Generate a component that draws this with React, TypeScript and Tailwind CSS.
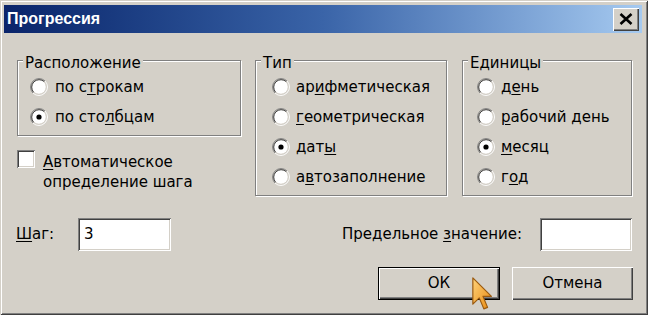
import React from "react";

const FONT = { fontFamily: '"DejaVu Sans", "Noto Sans", sans-serif' };

function Radio({ checked }: { checked?: boolean }) {
  return (
    <svg width="18" height="18" viewBox="0 0 18 18" className="shrink-0">
      <circle cx="9" cy="9" r="7" fill="#ffffff" />
      <path d="M2.99 15.01 A8.5 8.5 0 0 1 15.01 2.99" fill="none" stroke="#808080" strokeWidth="1" />
      <path d="M15.01 2.99 A8.5 8.5 0 0 1 2.99 15.01" fill="none" stroke="#ffffff" strokeWidth="1" />
      <path d="M3.7 14.3 A7.5 7.5 0 0 1 14.3 3.7" fill="none" stroke="#404040" strokeWidth="1" />
      <path d="M14.3 3.7 A7.5 7.5 0 0 1 3.7 14.3" fill="none" stroke="#d4d0c8" strokeWidth="1" />
      {checked && <circle cx="9" cy="9" r="2.6" fill="#000000" />}
    </svg>
  );
}

function RadioRow({
  checked,
  pre,
  u,
  post,
  gap,
}: {
  checked?: boolean;
  pre: string;
  u: string;
  post: string;
  gap: string;
}) {
  return (
    <div className={`flex items-center h-[30px] ${gap}`}>
      <Radio checked={checked} />
      <span className="whitespace-nowrap">
        {pre}
        <span className="underline underline-offset-2">{u}</span>
        {post}
      </span>
    </div>
  );
}

function Group({
  title,
  width,
  pad,
  children,
}: {
  title: string;
  width: string;
  pad: string;
  children: React.ReactNode;
}) {
  return (
    <div
      className={`${width} flex flex-col border border-[#808080] shadow-[inset_1px_1px_0_#ffffff,1px_1px_0_#ffffff] pb-[3px]`}
    >
      <span className="-mt-[7px] ml-[5px] self-start px-[2px] bg-[#d4d0c8] leading-[18px] whitespace-nowrap">
        {title}
      </span>
      <div className={`flex flex-col ${pad}`}>{children}</div>
    </div>
  );
}

const sunken =
  "bg-white shadow-[inset_1px_1px_0_#808080,inset_-1px_-1px_0_#ffffff,inset_2px_2px_0_#404040,inset_-2px_-2px_0_#d4d0c8]";

const raised =
  "bg-[#d4d0c8] shadow-[inset_1px_1px_0_#ffffff,inset_-1px_-1px_0_#404040,inset_-2px_-2px_0_#808080]";

export default function App() {
  return (
    <div
      className="relative w-[648px] h-[315px] bg-[#d4d0c8] pt-[5px] pl-[4px] pr-[6px] flex flex-col text-black text-[15px] shadow-[inset_1px_1px_0_#d4d0c8,inset_-1px_-1px_0_#404040,inset_2px_2px_0_#ffffff,inset_-2px_-2px_0_#808080] overflow-hidden"
      style={FONT}
    >
      {/* Title bar */}
      <div className="h-[28px] flex items-center justify-between bg-linear-to-r from-[#0a246a] via-[#3a64a8] to-[#a6caf0] pl-[3px] pr-[3px]">
        <span
          className="text-white font-bold text-[16px] leading-none"
          style={{ fontFamily: '"Liberation Sans", Arial, sans-serif' }}
        >
          Прогрессия
        </span>
        <div className={`w-[26px] h-[23px] ${raised} flex items-center justify-center`}>
          <svg width="14" height="12" viewBox="0 0 14 12">
            <path d="M1.5 1 L12.5 11 M12.5 1 L1.5 11" stroke="#000" strokeWidth="2.6" />
          </svg>
        </div>
      </div>

      {/* Body */}
      <div className="ml-[13px] w-[615px] flex flex-col">
        {/* Groups row */}
        <div className="mt-[27px] flex items-start">
          <div className="flex flex-col w-[224px]">
            <Group title="Расположение" width="w-[224px]" pad="pl-[12px]">
              <RadioRow pre="по с" u="т" post="рокам" gap="gap-[7px]" />
              <RadioRow checked pre="по сто" u="л" post="бцам" gap="gap-[7px]" />
            </Group>
            <div className="mt-[14px] flex items-start gap-[8px]">
              <div className={`w-[18px] h-[18px] ${sunken}`} />
              <div className="pt-[2px] leading-[20px]">
                <div>
                  <span className="underline underline-offset-2">А</span>втоматическое
                </div>
                <div>определение шага</div>
              </div>
            </div>
          </div>

          <div className="ml-[14px]">
            <Group title="Тип" width="w-[192px]" pad="pl-[16px]">
              <RadioRow pre="ар" u="и" post="фметическая" gap="gap-[6px]" />
              <RadioRow pre="" u="г" post="еометрическая" gap="gap-[6px]" />
              <RadioRow checked pre="дат" u="ы" post="" gap="gap-[6px]" />
              <RadioRow pre="а" u="в" post="тозаполнение" gap="gap-[6px]" />
            </Group>
          </div>

          <div className="ml-[15px]">
            <Group title="Единицы" width="w-[170px]" pad="pl-[14px]">
              <RadioRow pre="д" u="е" post="нь" gap="gap-[6px]" />
              <RadioRow pre="" u="р" post="абочий день" gap="gap-[6px]" />
              <RadioRow checked pre="" u="м" post="есяц" gap="gap-[6px]" />
              <RadioRow pre="г" u="о" post="д" gap="gap-[6px]" />
            </Group>
          </div>
        </div>

        {/* Step / limit row */}
        <div className="mt-[22px] h-[33px] flex items-center">
          <span className="w-[62px] -ml-[1px]">
            <span className="underline underline-offset-2">Ш</span>аг:
          </span>
          <div className={`w-[93px] h-[33px] ${sunken} flex items-center pl-[6px]`}>3</div>
          <div className="flex-1" />
          <span className="whitespace-nowrap">
            Предельное <span className="underline underline-offset-2">з</span>начение:
          </span>
          <div className={`ml-[18px] w-[92px] h-[33px] ${sunken}`} />
        </div>

        {/* Buttons */}
        <div className="mt-[16px] flex justify-end gap-[12px] -mr-[1px]">
          <div className="w-[122px] h-[33px] border border-black">
            <div className={`w-full h-full ${raised} flex items-center justify-center`}>ОК</div>
          </div>
          <div className={`w-[121px] h-[33px] ${raised} flex items-center justify-center`}>Отмена</div>
        </div>
      </div>

      {/* Mouse cursor */}
      <svg
        className="absolute left-[472px] top-[277px]"
        width="22"
        height="34"
        viewBox="0 0 13 20"
      >
        <defs>
          <linearGradient id="cur" x1="0" y1="0" x2="1" y2="1">
            <stop offset="0" stopColor="#ffd27a" />
            <stop offset="1" stopColor="#e88a10" />
          </linearGradient>
        </defs>
        <path
          d="M0.5 0.5 L0.5 16 L4.3 12.3 L7 18.8 L9.2 17.9 L6.5 11.4 L11.5 11.4 Z"
          fill="url(#cur)"
          stroke="#9a5a10"
          strokeWidth="0.7"
          strokeLinejoin="round"
        />
      </svg>
    </div>
  );
}
